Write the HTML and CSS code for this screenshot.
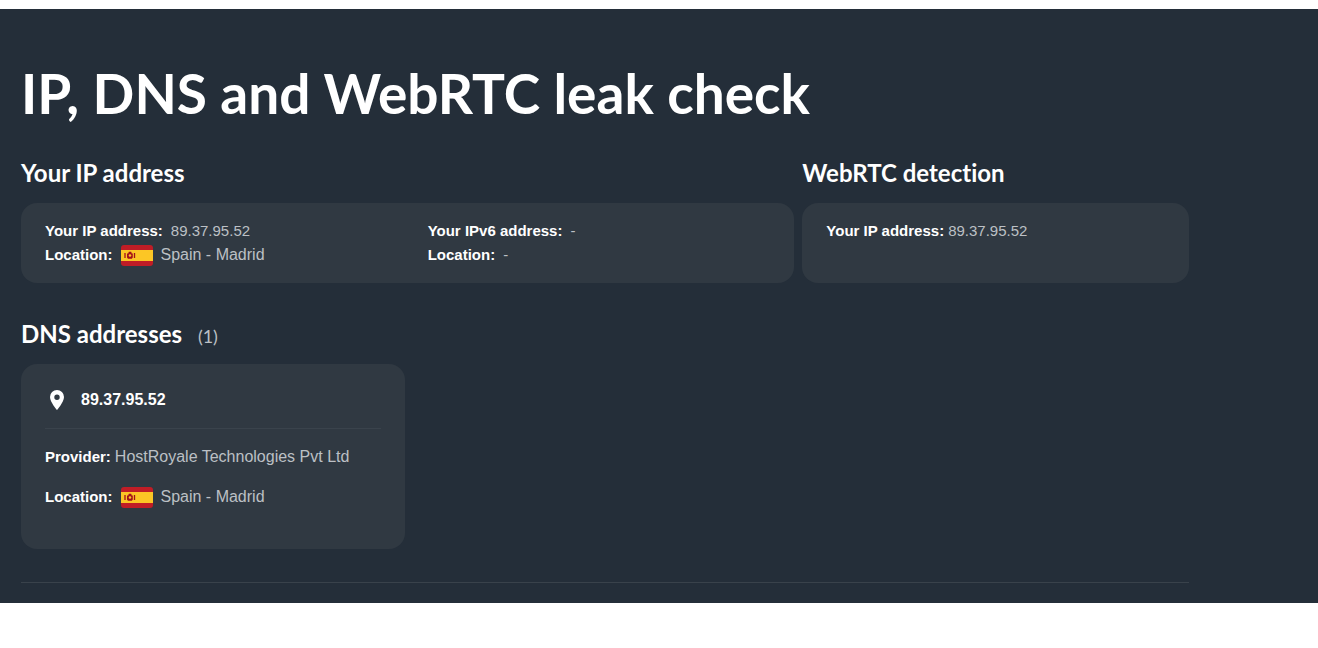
FILE: index.html
```html
<!DOCTYPE html>
<html lang="en">
<head>
<meta charset="utf-8">
<meta name="viewport" content="width=device-width, initial-scale=1">
<title>IP, DNS and WebRTC leak check</title>
<link rel="stylesheet" href="styles.css">
</head>
<body>
<svg width="0" height="0" class="sprite" aria-hidden="true">
  <symbol id="flag-es" viewBox="0 0 32 21">
    <rect width="32" height="21" rx="3" fill="#c01d26"/>
    <rect y="5" width="32" height="11" fill="#fcc625"/>
    <path d="M4 8v5M13.500 8v5" stroke="#a3121a" stroke-width="1.300" fill="none"/>
    <path d="M6 8.500h1.200l.6-1.700h2.400l.6 1.700h1v4l-1 1.200h-3.800l-1-1.200z" fill="#a3121a"/>
    <circle cx="9" cy="10.500" r="1.300" fill="#fcc625"/>
  </symbol>
</svg>
<main class="leak-check">
  <div class="container">
    <h1 class="title">IP, DNS and WebRTC leak check</h1>
    <div class="results">
      <section>
        <h2 class="heading">Your IP address</h2>
        <div class="card card-split">
          <div>
            <p class="row"><strong>Your IP address:</strong><span>89.37.95.52</span></p>
            <p class="row"><strong>Location:</strong><svg class="flag" role="img" aria-label="Flag of Spain"><use href="#flag-es"/></svg><span class="name">Spain - Madrid</span></p>
          </div>
          <div>
            <p class="row"><strong>Your IPv6 address:</strong><span>-</span></p>
            <p class="row"><strong>Location:</strong><span>-</span></p>
          </div>
        </div>
      </section>
      <section>
        <h2 class="heading">WebRTC detection</h2>
        <div class="card">
          <p class="row row-tight"><strong>Your IP address:</strong><span>89.37.95.52</span></p>
        </div>
      </section>
    </div>
    <section class="dns">
      <h2 class="heading">DNS addresses <span class="count">(1)</span></h2>
      <div class="dns-list">
        <article class="card dns-card">
          <h3 class="server">
            <svg class="pin" viewBox="0 0 24 24" aria-hidden="true"><path fill="currentColor" fill-rule="evenodd" d="M12 2a7 7 0 0 0-7 7c0 5 7 13 7 13s7-8 7-13a7 7 0 0 0-7-7zm0 4.500a2.700 2.700 0 1 1 0 5.400 2.700 2.700 0 0 1 0-5.400z"/></svg>
            89.37.95.52
          </h3>
          <p class="row row-tight"><strong>Provider:</strong><span class="name">HostRoyale Technologies Pvt Ltd</span></p>
          <p class="row"><strong>Location:</strong><svg class="flag" role="img" aria-label="Flag of Spain"><use href="#flag-es"/></svg><span class="name">Spain - Madrid</span></p>
        </article>
      </div>
    </section>
  </div>
</main>
</body>
</html>
```
FILE: styles.css
```css
* { box-sizing: border-box; }

body {
  margin: 0;
  background: #fff;
  font: 15px/24px "Liberation Sans", Arial, sans-serif;
}

h1, h2, h3, p { margin: 0; }

.sprite { position: absolute; }

.leak-check {
  margin-top: 9px;
  padding: 48px 21px 20px;
  background: #242e39;
  color: #bcc0c5;
}

.container {
  max-width: 1168px;
  padding-bottom: 33px;
  border-bottom: 1px solid #39424b;
}

.title {
  margin-bottom: 30px;
  color: #fff;
  font-family: Lato, sans-serif;
  font-size: 55px;
  font-weight: 700;
  line-height: 72px;
}

.results {
  display: grid;
  grid-template-columns: 2fr 1fr;
  gap: 8px;
}

.results > section {
  display: flex;
  flex-direction: column;
}

.heading {
  margin-bottom: 16px;
  color: #fff;
  font-family: Lato, sans-serif;
  font-size: 24px;
  font-variant-ligatures: none;
  font-weight: 700;
  line-height: 28px;
}

.count {
  margin-left: 10px;
  color: #bcc0c5;
  font-size: 18px;
  font-weight: 400;
  line-height: 1;
}

.card {
  flex: 1;
  padding: 16px 24px;
  border-radius: 16px;
  background: #303942;
}

.card-split {
  display: grid;
  grid-template-columns: 1fr 1fr;
  gap: 40px;
  min-height: 80px;
}

.row {
  display: flex;
  align-items: center;
  gap: 8px;
}

.row-tight { gap: 4px; }

.row strong, .server { color: #fff; }

.name { font-size: 16px; }

.flag {
  width: 32px;
  height: 21px;
}

.dns { margin-top: 37px; }

.dns-list {
  display: grid;
  grid-template-columns: repeat(3, 1fr);
  gap: 8px;
}

.dns-card {
  display: grid;
  gap: 16px;
  padding: 24px 24px 40px;
}

.server {
  display: flex;
  align-items: center;
  gap: 12px;
  padding-bottom: 16px;
  border-bottom: 1px solid #3a434c;
  font-size: 16px;
  line-height: 24px;
}

.pin {
  width: 24px;
  height: 24px;
}
```
